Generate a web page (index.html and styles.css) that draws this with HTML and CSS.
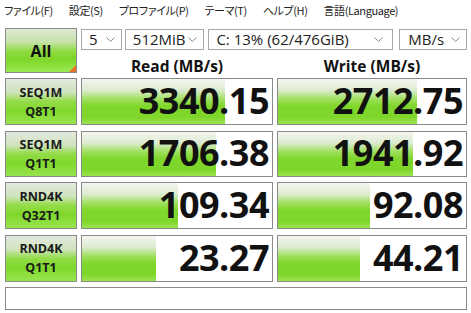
FILE: index.html
```html
<!DOCTYPE html>
<html lang="ja">
<head>
<meta charset="utf-8">
<link rel="stylesheet" href="styles.css">
</head>
<body>
<div class="menu">
  <span class="mi">ファイル(F)</span>
  <span class="mi">設定(S)</span>
  <span class="mi">プロファイル(P)</span>
  <span class="mi">テーマ(T)</span>
  <span class="mi">ヘルプ(H)</span>
  <span class="mi">言語(Language)</span>
</div>
<div class="main">
  <div class="allbtn">All<span class="corner"></span></div>
  <div class="selects">
    <div class="sel s1"><span>5</span><svg class="chev" viewBox="0 0 9 5"><polyline points="0.5,0.5 4.5,4.5 8.5,0.5"/></svg></div>
    <div class="sel s2"><span>512MiB</span><svg class="chev" viewBox="0 0 9 5"><polyline points="0.5,0.5 4.5,4.5 8.5,0.5"/></svg></div>
    <div class="sel s3"><span>C: 13% (62/476GiB)</span><svg class="chev" viewBox="0 0 9 5"><polyline points="0.5,0.5 4.5,4.5 8.5,0.5"/></svg></div>
    <div class="sel s4"><span>MB/s</span><svg class="chev" viewBox="0 0 9 5"><polyline points="0.5,0.5 4.5,4.5 8.5,0.5"/></svg></div>
  </div>
  <div class="head hread">Read (MB/s)</div>
  <div class="head hwrite">Write (MB/s)</div>

  <div class="label"><span>SEQ1M</span><span>Q8T1</span></div>
  <div class="cell"><div class="bar" style="width:75.5%"></div><span class="num">3340.15</span></div>
  <div class="cell"><div class="bar" style="width:74%"></div><span class="num">2712.75</span></div>

  <div class="label"><span>SEQ1M</span><span>Q1T1</span></div>
  <div class="cell"><div class="bar" style="width:70.7%"></div><span class="num">1706.38</span></div>
  <div class="cell"><div class="bar" style="width:71.8%"></div><span class="num">1941.92</span></div>

  <div class="label"><span>RND4K</span><span>Q32T1</span></div>
  <div class="cell"><div class="bar" style="width:50.6%"></div><span class="num">109.34</span></div>
  <div class="cell"><div class="bar" style="width:49%"></div><span class="num">92.08</span></div>

  <div class="label"><span>RND4K</span><span>Q1T1</span></div>
  <div class="cell"><div class="bar" style="width:39%"></div><span class="num">23.27</span></div>
  <div class="cell"><div class="bar" style="width:43.7%"></div><span class="num">44.21</span></div>

  <div class="comment"></div>
</div>
</body>
</html>
```
FILE: styles.css
```css
* { box-sizing: border-box; }
html, body { margin: 0; padding: 0; background: #fff; }
body {
  width: 471px;
  height: 313px;
  overflow: hidden;
  font-family: "Open Sans", "Noto Sans", "Noto Sans CJK JP", sans-serif;
  color: #111;
}
.menu {
  height: 20px;
  display: flex;
  align-items: center;
  gap: 16px;
  padding-left: 4px;
  font-family: "Noto Sans CJK JP", sans-serif;
  font-feature-settings: "palt";
  font-size: 11px;
  color: #222;
  letter-spacing: -0.4px;
}
.main {
  display: grid;
  grid-template-columns: 72px 192px 190px;
  grid-template-rows: 45px 47px 46px 47px 47px 23px;
  column-gap: 4px;
  row-gap: 5.4px;
  padding: 8px 0 0 5px;
}
.allbtn {
  grid-column: 1;
  grid-row: 1;
  position: relative;
  border: 1px solid #8a8a8a;
  background: linear-gradient(#dfe8d6 0%, #c6e3a8 30%, #8fdb42 52%, #7fd62a 70%, #9be852 100%);
  display: flex;
  align-items: center;
  justify-content: center;
  font-weight: 700;
  font-size: 16px;
  color: #111;
}
.corner {
  position: absolute;
  right: 0;
  bottom: 0;
  width: 0;
  height: 0;
  border-style: solid;
  border-width: 0 0 7px 7px;
  border-color: transparent transparent #e8742a transparent;
}
.selects {
  grid-column: 2 / 4;
  grid-row: 1;
  align-self: start;
  display: flex;
  margin-top: 1px;
  height: 21px;
}
.sel {
  height: 21px;
  border: 1px solid #a8a8a8;
  background: #fff;
  display: flex;
  align-items: center;
  justify-content: space-between;
  padding: 0 6px 0 7px;
  font-family: "Open Sans", sans-serif;
  font-size: 15px;
  color: #222;
}
.sel span { line-height: 19px; }
.s1 { width: 41px; margin-right: 3px; }
.s2 { width: 80px; margin-right: 4px; padding-left: 7px; }
.s3 { width: 186px; margin-right: 6px; padding-left: 7px; padding-right: 9px; }
.s4 { width: 68px; padding-left: 8px; }
.chev {
  width: 9px;
  height: 5px;
  fill: none;
  stroke: #8a8a8a;
  stroke-width: 1;
}
.head {
  grid-row: 1;
  align-self: end;
  text-align: center;
  font-weight: 700;
  font-size: 15.5px;
  line-height: 18px;
  margin-bottom: -2px;
  color: #111;
}
.hread { grid-column: 2; }
.hwrite { grid-column: 3; }
.label {
  border: 1px solid #8a8a8a;
  background: linear-gradient(#e3e9de 0%, #cfe3bd 30%, #93dc48 50%, #80d72c 70%, #97e44e 100%);
  display: flex;
  flex-direction: column;
  align-items: center;
  justify-content: center;
  font-weight: 700;
  font-size: 12.5px;
  line-height: 19px;
  color: #1a1a1a;
}
.cell {
  position: relative;
  border: 1px solid #8a8a8a;
  background: #fff;
  display: flex;
  align-items: center;
  justify-content: flex-end;
  padding-right: 3px;
}
.bar {
  position: absolute;
  left: 0;
  top: 0;
  bottom: 0;
  background: linear-gradient(#f4f6f1 0%, #dcebcf 25%, #9fe05e 45%, #80d72c 60%, #7fd62a 85%, #9be452 100%);
}
.num {
  position: relative;
  font-family: "Open Sans", sans-serif;
  font-weight: 700;
  font-size: 36px;
  line-height: 38px;
  letter-spacing: -0.5px;
  color: #111;
  margin-top: -1px;
}
.comment {
  grid-column: 1 / 4;
  border: 1px solid #8a8a8a;
  background: #fff;
}
```
